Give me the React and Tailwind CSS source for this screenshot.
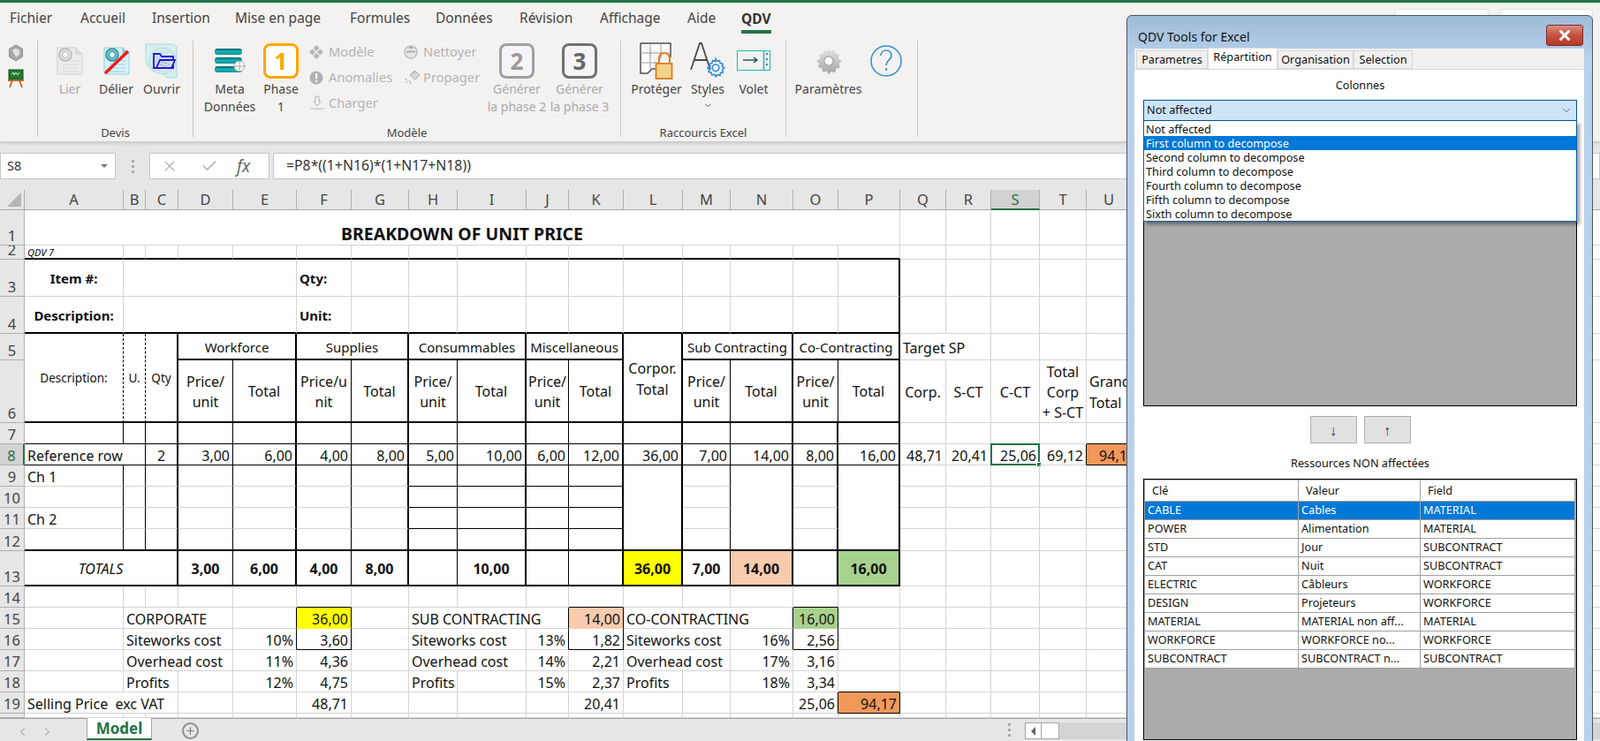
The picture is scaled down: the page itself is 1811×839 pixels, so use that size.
import { ChevronDown, ChevronLeft, ChevronRight, Plus, X, Check } from 'lucide-react';

const COLS = ['A', 'B', 'C', 'D', 'E', 'F', 'G', 'H', 'I', 'J', 'K', 'L', 'M', 'N', 'O', 'P', 'Q', 'R', 'S', 'T', 'U'];
const FRAMED = COLS.slice(0, 16);

// thin and thick black cell edges
const tr = 'border-r-black';
const TR = 'border-r-2 border-r-black';
const tb = 'border-b-black';
const TB = 'border-b-2 border-b-black';
const NUM = 'justify-end';
const MID = 'justify-center text-center';
const GROUP_HEAD = 'text-[15px]';

const SPAN = { 2: 'col-span-2', 3: 'col-span-3', 4: 'col-span-4', 16: 'col-span-16' };

const FRAME = { A: tr, B: tr, C: TR, D: tr, E: TR, F: tr, G: TR, H: tr, I: TR, J: tr, K: TR, L: TR, M: tr, N: TR, O: TR, P: TR };
const HEAD = { D: tr, E: TR, F: tr, G: TR, H: tr, I: TR, J: tr, K: TR, M: tr, N: TR, O: tr, P: TR };

const num = (t, c = '') => ({ t, c: `${NUM} ${c}` });
const mid = (t, c = '') => ({ t, c: `${MID} ${c}` });
const bold = (t, c = '') => ({ t, c: `${MID} font-bold ${c}` });
const hdr = (t, c = '') => ({ t, c: `${MID} leading-[23px] whitespace-pre-line ${c}` });

const ROWS = [
  { n: 1, cells: { A: { span: 16, t: 'BREAKDOWN OF UNIT PRICE', c: `${MID} font-bold text-[19.5px] pt-[14px]` } } },
  { n: 2, under: TB, cells: { A: { t: 'QDV 7', c: 'italic text-[11px] text-black' } } },
  {
    n: 3,
    frame: { P: TR },
    cells: {
      A: { t: 'Item #:', c: `${MID} font-bold text-[15px]` },
      B: { span: 4 },
      F: { t: 'Qty:', c: 'font-bold text-[15px]' },
    },
  },
  {
    n: 4,
    frame: { P: TR },
    under: TB,
    cells: {
      A: { t: 'Description:', c: `${MID} font-bold text-[15px] ${TB}` },
      B: { span: 4, c: TB },
      F: { t: 'Unit:', c: `font-bold text-[15px] ${TB}` },
    },
  },
  {
    n: 5,
    cells: {
      A: { t: 'Description:', c: `${MID} row-span-2 text-[13.5px] ${TB} ${tr} [border-right-style:dashed]` },
      B: { t: 'U.', c: `${MID} row-span-2 text-[13.5px] ${TB} ${tr} [border-right-style:dashed]` },
      C: { t: 'Qty', c: `${MID} row-span-2 text-[13.5px] ${TB} ${TR}` },
      D: { span: 2, t: 'Workforce', c: `${MID} ${GROUP_HEAD} ${TR} ${TB}` },
      F: { span: 2, t: 'Supplies', c: `${MID} ${GROUP_HEAD} ${TR} ${TB}` },
      H: { span: 2, t: 'Consummables', c: `${MID} ${GROUP_HEAD} ${TR} ${TB}` },
      J: { span: 2, t: 'Miscellaneous', c: `${MID} ${GROUP_HEAD} ${TR} ${TB} !px-0` },
      L: { t: 'Corpor.\nTotal', c: `${MID} row-span-2 whitespace-pre-line leading-[24px] ${TR} ${TB}` },
      M: { span: 2, t: 'Sub Contracting', c: `${MID} ${GROUP_HEAD} ${TR} ${TB}` },
      O: { span: 2, t: 'Co-Contracting', c: `${MID} ${GROUP_HEAD} ${TR} ${TB} !px-0` },
      Q: { span: 2, t: 'Target SP', c: 'items-end pb-[1px]' },
    },
  },
  {
    n: 6,
    skip: ['A', 'B', 'C', 'L'],
    frame: HEAD,
    under: TB,
    cells: {
      D: hdr('Price/\nunit'),
      E: hdr('Total'),
      F: hdr('Price/u\nnit'),
      G: hdr('Total'),
      H: hdr('Price/\nunit'),
      I: hdr('Total'),
      J: hdr('Price/\nunit'),
      K: hdr('Total'),
      M: hdr('Price/\nunit'),
      N: hdr('Total'),
      O: hdr('Price/\nunit'),
      P: hdr('Total'),
      Q: mid('Corp.'),
      R: mid('S-CT'),
      S: mid('C-CT'),
      T: { t: 'Total\nCorp\n+ S-CT', c: `${MID} leading-[23px] whitespace-pre !px-0` },
      U: { t: 'Grand\nTotal', c: 'leading-[24px] whitespace-pre-line !overflow-visible' },
    },
  },
  { n: 7, frame: FRAME, under: tb, underBy: { U: tb }, cells: {} },
  {
    n: 8,
    active: true,
    frame: FRAME,
    under: tb,
    cells: {
      A: { span: 2, t: 'Reference row', c: tr },
      C: mid('2'),
      D: num('3,00'),
      E: num('6,00'),
      F: num('4,00'),
      G: num('8,00'),
      H: num('5,00'),
      I: num('10,00'),
      J: num('6,00'),
      K: num('12,00'),
      L: num('36,00'),
      M: num('7,00'),
      N: num('14,00'),
      O: num('8,00'),
      P: num('16,00'),
      Q: num('48,71'),
      R: num('20,41'),
      S: { ...num('25,06'), selected: true },
      T: num('69,12', tr),
      U: num('94,17', `bg-[#f1985a] ${tr} ${tb}`),
    },
  },
  {
    n: 9,
    frame: FRAME,
    underBy: { H: tb, I: tb, J: tb, K: tb },
    cells: {
      A: { t: 'Ch 1' },
      L: { c: 'row-span-4 !border-b-2 !border-b-black' },
      N: { c: 'row-span-4 !border-b-2 !border-b-black' },
      P: { c: 'row-span-4 !border-b-2 !border-b-black' },
    },
  },
  { n: 10, skip: ['L', 'N', 'P'], frame: FRAME, underBy: { H: tb, I: tb, J: tb, K: tb }, cells: {} },
  { n: 11, skip: ['L', 'N', 'P'], frame: FRAME, underBy: { H: tb, I: tb, J: tb, K: tb }, cells: { A: { t: 'Ch 2' } } },
  { n: 12, skip: ['L', 'N', 'P'], frame: FRAME, under: TB, cells: {} },
  {
    n: 13,
    frame: FRAME,
    under: TB,
    cells: {
      A: { span: 3, t: 'TOTALS', c: `${MID} italic ${TR}` },
      D: bold('3,00'),
      E: bold('6,00'),
      F: bold('4,00'),
      G: bold('8,00'),
      I: bold('10,00'),
      L: bold('36,00', 'bg-[#ffff00]'),
      M: bold('7,00'),
      N: bold('14,00', `bg-[#f8cbad] ${tr}`),
      O: { c: TR },
      P: bold('16,00', 'bg-[#a9d18e]'),
    },
  },
  { n: 14, underBy: { F: tb, K: tb, O: tb }, cells: {} },
  {
    n: 15,
    cells: {
      B: { span: 3, t: 'CORPORATE' },
      E: { c: tr },
      F: num('36,00', `bg-[#ffff00] ${tr} border-b-[#ffff00]`),
      H: { span: 3, t: 'SUB CONTRACTING', c: tr },
      K: num('14,00', `bg-[#f8cbad] ${tr} border-b-[#f8cbad]`),
      L: { span: 3, t: 'CO-CONTRACTING', c: tr },
      O: num('16,00', `bg-[#a9d18e] ${tr} border-b-[#a9d18e]`),
    },
  },
  {
    n: 16,
    cells: {
      B: { span: 3, t: 'Siteworks cost' },
      E: num('10%', tr),
      F: num('3,60', `${tr} ${tb}`),
      H: { span: 2, t: 'Siteworks cost' },
      J: num('13%', tr),
      K: num('1,82', `${tr} ${tb}`),
      L: { span: 2, t: 'Siteworks cost' },
      N: num('16%', tr),
      O: num('2,56', `${tr} ${tb}`),
    },
  },
  {
    n: 17,
    cells: {
      B: { span: 3, t: 'Overhead cost' },
      E: num('11%'),
      F: num('4,36'),
      H: { span: 2, t: 'Overhead cost' },
      J: num('14%'),
      K: num('2,21'),
      L: { span: 2, t: 'Overhead cost' },
      N: num('17%'),
      O: num('3,16'),
    },
  },
  {
    n: 18,
    underBy: { P: tb },
    cells: {
      B: { span: 2, t: 'Profits' },
      E: num('12%'),
      F: num('4,75'),
      H: { t: 'Profits' },
      J: num('15%'),
      K: num('2,37'),
      L: { t: 'Profits' },
      N: num('18%'),
      O: num('3,34'),
    },
  },
  {
    n: 19,
    cells: {
      A: { span: 3, t: 'Selling Price  exc VAT', c: 'whitespace-pre' },
      F: num('48,71'),
      K: num('20,41'),
      O: num('25,06', tr),
      P: num('94,17', `bg-[#f1985a] ${tr} ${tb}`),
    },
  },
  { n: 20, hideLabel: true, cells: {} },
];

const RESOURCES = [
  ['CABLE', 'Cables', 'MATERIAL'],
  ['POWER', 'Alimentation', 'MATERIAL'],
  ['STD', 'Jour', 'SUBCONTRACT'],
  ['CAT', 'Nuit', 'SUBCONTRACT'],
  ['ELECTRIC', 'Câbleurs', 'WORKFORCE'],
  ['DESIGN', 'Projeteurs', 'WORKFORCE'],
  ['MATERIAL', 'MATERIAL non aff...', 'MATERIAL'],
  ['WORKFORCE', 'WORKFORCE no...', 'WORKFORCE'],
  ['SUBCONTRACT', 'SUBCONTRACT n...', 'SUBCONTRACT'],
];

const OPTIONS = [
  'Not affected',
  'First column to decompose',
  'Second column to decompose',
  'Third column to decompose',
  'Fourth column to decompose',
  'Fifth column to decompose',
  'Sixth column to decompose',
];

/* ---------- ribbon icons ---------- */

const Hex = () => (
  <svg width="18" height="20" viewBox="0 0 18 20">
    <path d="M9 1l7.500 4.300v9L9 19l-7.500-4.700v-9z" fill="#a8a8a8" stroke="#8c8c8c" />
    <path d="M5 7l4-2.500 4 2.500v5l-4 2.500z" fill="#e2e2e2" />
  </svg>
);

const Board = () => (
  <svg width="20" height="22" viewBox="0 0 20 22">
    <rect x="2" y="1" width="16" height="11" fill="#1f7a2e" stroke="#0f4a1a" />
    <path d="M5 6l2-2 1 3 2-3 2 3 2-3" stroke="#e8f5e8" fill="none" strokeWidth="0.900" />
    <path d="M1 13h18" stroke="#c46a1c" strokeWidth="2" />
    <path d="M6 13l-3 8M14 13l3 8" stroke="#a85412" strokeWidth="1.500" />
  </svg>
);

const Doc = ({ slash, faded }) => (
  <svg width="32" height="32" viewBox="0 0 32 32">
    <path d="M2 1h21l7 7v23H2z" fill={faded ? '#ececec' : '#d8f2f6'} stroke={faded ? '#cfcfcf' : '#8ed4de'} />
    <path d="M23 1v7h7" fill={faded ? '#dcdcdc' : '#8fc8d8'} stroke={faded ? '#cfcfcf' : '#8ed4de'} />
    {[16, 20, 24, 28].map((y) => (
      <path key={y} d={`M8 ${y}h18`} stroke={faded ? '#d9d9d9' : '#9ad0e8'} />
    ))}
    <circle cx="11" cy="9" r="7" fill={faded ? '#dedede' : '#63c3cf'} stroke={faded ? '#b9b9b9' : '#2f8f9c'} strokeWidth="1.500" />
    <circle cx="11" cy="9" r="3.500" fill="#f5f5f5" stroke={faded ? '#bcbcbc' : '#3a8da0'} />
    {slash && <path d="M3 30L29 5" stroke="#f01a1a" strokeWidth="3.500" />}
  </svg>
);

const OpenDoc = () => (
  <svg width="38" height="40" viewBox="0 0 38 40">
    <path d="M1 1h32l3 3v35H26l-6-5C8 34 1 26 1 18z" fill="#d6eef0" stroke="#a8d8dc" />
    <circle cx="20" cy="20" r="15" fill="#cfe8ea" stroke="#b5dcdf" />
    <path d="M10 12h7l2 3h13v13H10z" fill="#c8dce6" stroke="#2a10e0" strokeWidth="1.800" />
    <path d="M13 28l4-9h17l-4 9z" fill="#cfdfe4" stroke="#2a10e0" strokeWidth="1.800" />
    <path d="M18 21l10 3M17 24l9 3" stroke="#96b3bd" />
  </svg>
);

const Meta = () => (
  <svg width="36" height="32" viewBox="0 0 36 32">
    <defs>
      <linearGradient id="metaBar" x1="0" y1="0" x2="0" y2="1">
        <stop offset="0" stopColor="#0f5f66" />
        <stop offset="0.500" stopColor="#14b3b8" />
        <stop offset="1" stopColor="#0c8f96" />
      </linearGradient>
    </defs>
    <rect x="1" y="2" width="31" height="7" rx="3" fill="url(#metaBar)" />
    <rect x="1" y="12" width="31" height="7" rx="3" fill="url(#metaBar)" />
    <rect x="1" y="22" width="31" height="7" rx="3" fill="url(#metaBar)" />
    <circle cx="29" cy="22" r="6" fill="#f3f2f1" stroke="#8a8a8a" strokeDasharray="1.500 1" />
    <path d="M23 22h12M29 16v12" stroke="#8a8a8a" strokeDasharray="1.500 1" />
  </svg>
);

const NumBox = ({ n, c }) => (
  <div className={`w-[40px] h-[40px] rounded-lg border-[3px] flex items-center justify-center text-[26px] font-bold font-['Noto_Sans',sans-serif] ${c}`}>
    {n}
  </div>
);

const Diamonds = () => (
  <svg width="16" height="16" viewBox="0 0 16 16" fill="#b5b5b5">
    <path d="M8 0l3.500 3.500L8 7 4.500 3.500zM3.500 4.500L7 8l-3.500 3.500L0 8zM12.500 4.500L16 8l-3.500 3.500L9 8zM8 9l3.500 3.500L8 16l-3.500-3.500z" />
  </svg>
);

const Warn = () => (
  <svg width="16" height="16" viewBox="0 0 16 16">
    <circle cx="8" cy="8" r="7.500" fill="#b0b0b0" />
    <rect x="7" y="3" width="2.200" height="6.500" fill="#fff" />
    <rect x="7" y="11" width="2.200" height="2.200" fill="#fff" />
  </svg>
);

const Load = () => (
  <svg width="18" height="18" viewBox="0 0 18 18" fill="none" stroke="#b5b5b5">
    <path d="M7 1h4v6h2l-4 5-4-5h2z" />
    <path d="M1 14c2 2 3 2 4 .500 1 1.500 3 1.500 4 0 1 1.500 3 1.500 4 0 1 1.500 2 1.500 4-.500" />
  </svg>
);

const Clean = () => (
  <svg width="16" height="16" viewBox="0 0 16 16">
    <circle cx="8" cy="8" r="7" fill="#e4e4e4" stroke="#bdbdbd" strokeWidth="1.500" />
    <path d="M3 7.500h10" stroke="#9f9f9f" strokeWidth="1.500" />
    <path d="M6 3h4" stroke="#a8a8a8" strokeWidth="2" />
  </svg>
);

const Spread = () => (
  <svg width="20" height="18" viewBox="0 0 20 18" fill="none" stroke="#a6a6a6">
    <path d="M12 1l6 5-5 5-6-5z" fill="#dedede" />
    <path d="M10 3l5 5M13 2l5 5M9 6l5-4" strokeDasharray="1 1" />
    <path d="M1 10l3 2M2 15l2-2M6 12l2 4" />
  </svg>
);

const Protect = () => (
  <svg width="38" height="44" viewBox="0 0 38 44">
    <path d="M1 2h34v16M1 2v34h8l5-5h8" fill="#fff" stroke="#4d4d4d" strokeWidth="1.500" />
    <path d="M1 13h34M1 24h22M12 2v29M24 2v18" stroke="#9a9a9a" fill="none" />
    <path d="M22 25v-6a6 6 0 0 1 12 0v6" fill="none" stroke="#e07b16" strokeWidth="2" />
    <rect x="18.500" y="25" width="18" height="17" fill="#f5d48c" stroke="#e07b16" strokeWidth="1.800" />
  </svg>
);

const GearPath = 'M12 2l1.600 3.200 3.500-1 .9 3.500 3.500.900-1 3.500L23.500 14l-2.500 2.500 1 3.500-3.500.9-.9 3.500-3.500-1L12 26l-1.600-3.100-3.500 1-.9-3.500-3.500-.9 1-3.500L1 14l3.500-1.900-1-3.500 3.500-.9.900-3.500 3.500 1z';

const StylesIcon = () => (
  <svg width="40" height="44" viewBox="0 0 40 44" fill="none">
    <path d="M1 32L11 2h2l10 30M5 21h14" stroke="#4a4a4a" strokeWidth="1.800" />
    <g transform="translate(19 18) scale(0.840)" stroke="#2f8fd8" strokeWidth="2">
      <path d={GearPath} />
      <circle cx="12" cy="14" r="4.500" />
    </g>
  </svg>
);

const Pane = () => (
  <svg width="38" height="24" viewBox="0 0 38 24" fill="none">
    <rect x="0.500" y="0.500" width="37" height="22" stroke="#1cb9bd" />
    <path d="M30.500 1v22" stroke="#1cb9bd" strokeWidth="1.500" />
    <path d="M7 11h15M19 8l4 3-4 3" stroke="#1c5a66" strokeWidth="1.500" />
    <path d="M33 4h2M33 10h2M33 16h2" stroke="#1c5a66" strokeWidth="1.500" />
  </svg>
);

const BigGear = () => (
  <svg width="32" height="36" viewBox="0 0 24 28">
    <defs>
      <linearGradient id="gearFill" x1="0" y1="0" x2="0" y2="1">
        <stop offset="0" stopColor="#e6e6e6" />
        <stop offset="1" stopColor="#a3a3a3" />
      </linearGradient>
    </defs>
    <path d={GearPath} fill="url(#gearFill)" />
    <circle cx="12" cy="14" r="4" fill="#fafafa" stroke="#a0a0a0" />
  </svg>
);

const Help = () => (
  <svg width="36" height="36" viewBox="0 0 36 36" fill="none" stroke="#2e8fd0">
    <circle cx="18" cy="18" r="17" strokeWidth="1.500" />
    <path d="M12 12c0-4 3-6 6-6 4 0 6 3 6 6 0 5-6 5-6 11" strokeWidth="1.600" />
    <path d="M18 26v3" strokeWidth="1.800" />
  </svg>
);

const Corner = () => (
  <svg width="16" height="16" viewBox="0 0 16 16">
    <path d="M16 0v16H0z" fill="#b4b4b4" />
  </svg>
);

/* ---------- ribbon parts ---------- */

const BigBtn = ({ w, icon, label, muted, extra }) => (
  <div className={`flex flex-col items-center shrink-0 ${w}`}>
    <div className="h-[44px] flex items-center justify-center">{icon}</div>
    <div className={`text-center whitespace-pre-line leading-[20px] ${muted ? 'text-[#a9a9a9]' : 'text-[#444]'}`}>{label}</div>
    {extra}
  </div>
);

const SmallBtn = ({ icon, label }) => (
  <div className="flex items-center h-[29px] text-[#b3b3b3] text-[14.7px]">
    <div className="w-[22px] flex justify-start">{icon}</div>
    <span>{label}</span>
  </div>
);

const Group = ({ w, pad, label, children }) => (
  <div className={`flex flex-col h-[109px] border-r border-[#c8c6c4] shrink-0 ${w}`}>
    <div className={`flex flex-1 pt-[1px] ${pad}`}>{children}</div>
    {label && <div className="h-[9px] leading-[9px] text-center text-[13px] text-[#444]">{label}</div>}
  </div>
);

const MENU = [
  ['Fichier', 'w-[80px]'],
  ['Accueil', 'w-[81px]'],
  ['Insertion', 'w-[94px]'],
  ['Mise en page', 'w-[130px]'],
  ['Formules', 'w-[97px]'],
  ['Données', 'w-[95px]'],
  ['Révision', 'w-[91px]'],
  ['Affichage', 'w-[99px]'],
  ['Aide', 'w-[61px]'],
];

const Ribbon = () => (
  <div className="h-[160px] bg-[#f3f2f1] shadow-[0_2px_4px_rgba(0,0,0,0.15)] relative z-10 font-['Noto_Sans',sans-serif] text-[14px] shrink-0">
    <div className="h-[3px] bg-[#217346]" />
    <div className="flex h-[36px] pl-[11px] text-[15.5px] text-[#444] items-center">
      {MENU.map(([name, w]) => (
        <div key={name} className={w}>
          {name}
        </div>
      ))}
      <div className="relative font-bold text-[#333] pt-[1px]">
        QDV
        <div className="absolute left-0 right-0 top-[25px] h-[4px] bg-[#217346]" />
      </div>
      <div className="ml-auto mr-[8px] flex self-end gap-[12px] mb-[1px]">
        <div className="w-[106px] h-[28px] bg-white rounded border border-[#e0dfde]" />
        <div className="w-[106px] h-[28px] bg-white rounded border border-[#e0dfde]" />
      </div>
    </div>
    <div className="flex pt-[7px]">
      <Group w="w-[43px]" pad="flex-col items-center gap-[8px] pt-[4px] pr-[6px]">
        <Hex />
        <Board />
      </Group>
      <Group w="w-[176px]" pad="pl-[10px]" label="Devis">
        <BigBtn w="w-[52px]" icon={<Doc faded />} label="Lier" muted />
        <BigBtn w="w-[53px]" icon={<Doc slash />} label="Délier" />
        <BigBtn w="w-[50px]" icon={<OpenDoc />} label="Ouvrir" />
      </Group>
      <Group w="w-[484px]" pad="pl-[11px]" label="Modèle">
        <BigBtn w="w-[60px]" icon={<Meta />} label={'Meta\nDonnées'} />
        <BigBtn w="w-[56px]" icon={<NumBox n="1" c="border-[#ffa500] text-[#ffa500] bg-white" />} label={'Phase\n1'} />
        <div className="w-[111px] shrink-0 pl-[4px] -mt-[3px]">
          <SmallBtn icon={<Diamonds />} label="Modèle" />
          <SmallBtn icon={<Warn />} label="Anomalies" />
          <SmallBtn icon={<Load />} label="Charger" />
        </div>
        <div className="w-[94px] shrink-0 -mt-[3px]">
          <SmallBtn icon={<Clean />} label="Nettoyer" />
          <SmallBtn icon={<Spread />} label="Propager" />
        </div>
        <BigBtn w="w-[68px]" icon={<NumBox n="2" c="border-[#a0a0a0] text-[#9a9a9a] bg-[#f6f3f8]" />} label={'Générer\nla phase 2'} muted />
        <BigBtn w="w-[74px]" icon={<NumBox n="3" c="border-[#707070] text-[#666] bg-[#f6f3f8]" />} label={'Générer\nla phase 3'} muted />
      </Group>
      <Group w="w-[187px]" pad="pl-[10px]" label="Raccourcis Excel">
        <BigBtn w="w-[60px]" icon={<Protect />} label="Protéger" />
        <BigBtn
          w="w-[56px]"
          icon={<StylesIcon />}
          label="Styles"
          extra={<ChevronDown size={11} className="text-[#444] mt-[3px]" />}
        />
        <BigBtn w="w-[48px]" icon={<Pane />} label="Volet" />
      </Group>
      <Group w="w-[149px]" pad="pl-[10px]">
        <BigBtn w="w-[75px]" icon={<BigGear />} label="Paramètres" />
        <BigBtn w="w-[56px]" icon={<Help />} label="" />
      </Group>
    </div>
  </div>
);

const FormulaBar = () => (
  <div className="h-[55px] bg-[#e6e6e6] shrink-0 pt-[13px] flex items-start font-['Noto_Sans',sans-serif]">
    <div className="w-[131px] h-[30px] bg-white border border-[#c6c6c6] flex items-center justify-between pl-[7px] pr-[8px] text-[14.5px] text-[#333]">
      S8
      <div className="w-0 h-0 border-x-[4px] border-x-transparent border-t-[4px] border-t-[#777]" />
    </div>
    <div className="w-[38px] h-[30px] flex flex-col items-center justify-center gap-[3px]">
      <div className="w-[3px] h-[3px] bg-[#aaa]" />
      <div className="w-[3px] h-[3px] bg-[#aaa]" />
      <div className="w-[3px] h-[3px] bg-[#aaa]" />
    </div>
    <div className="w-[136px] h-[30px] bg-white border border-[#c6c6c6] flex items-center">
      <X size={20} strokeWidth={1.5} className="text-[#b4b4b4] ml-[12px]" />
      <Check size={20} strokeWidth={2} className="text-[#b4b4b4] ml-[25px]" />
      <span className="ml-[21px] font-['Liberation_Serif',serif] italic text-[19px] text-[#666]">fx</span>
    </div>
    <div className="ml-[4px] flex-1 h-[30px] bg-white border border-[#c6c6c6] pl-[14px] flex items-center text-[15.8px] text-[#333]">
      =P8*((1+N16)*(1+N17+N18))
    </div>
  </div>
);

/* ---------- worksheet ---------- */

const Cell = ({ cell = {}, frame, under }) => {
  const span = cell.span ? SPAN[cell.span] : '';
  return (
    <div
      className={`relative flex items-center px-[3px] pt-[2px] whitespace-nowrap overflow-hidden border-r border-b border-[#d4d4d4] ${span} ${frame} ${under} ${cell.c || ''} ${cell.selected ? '!overflow-visible' : ''}`}
    >
      {cell.t}
      {cell.selected && (
        <div className="absolute -inset-[1px] border-2 border-[#217346]">
          <div className="absolute -right-[4px] -bottom-[4px] w-[6px] h-[6px] bg-[#217346] border border-white" />
        </div>
      )}
    </div>
  );
};

const Sheet = () => (
  <div className="grid grid-cols-[28px_112px_25px_37px_62px_72px_62px_65px_55px_78px_48px_62px_67px_54px_71px_51px_70px_52px_51px_55px_53px_59px_1fr] grid-rows-[23px_40px_16px_42px_42px_30px_71px_24px_24px_24px_24px_24px_25px_40px_24px_24px_24px_24px_24px_24px_5px] bg-white font-['Lato',sans-serif] text-[16px] text-[#111] shrink-0 overflow-hidden">
    <div className="bg-[#e6e6e6] border-r border-b border-[#a8a8a8] flex items-end justify-end pr-[3px] pb-[3px]">
      <Corner />
    </div>
    {COLS.map((c) => (
      <div
        key={c}
        className={`flex items-center justify-center pt-[1px] text-[#444] text-[16.5px] border-r border-[#b0b0b0] border-b ${c === 'S' ? 'bg-[#d2d2d2] text-[#217346] border-b-2 border-b-[#217346]' : 'bg-[#e6e6e6] border-b-[#a8a8a8]'} ${c === 'U' ? 'pr-[8px]' : ''}`}
      >
        {c}
      </div>
    ))}
    <div className="bg-[#e6e6e6] border-b border-[#a8a8a8]" />
    {ROWS.map((row) => {
      const taken = new Set(row.skip || []);
      const out = [];
      let i = 0;
      while (i < COLS.length) {
        const col = COLS[i];
        const cell = row.cells[col];
        if (!taken.has(col)) {
          const last = COLS[i + (cell?.span || 1) - 1];
          const frame = row.frame?.[cell?.span ? last : col] || '';
          const fromRow = FRAMED.includes(col) ? row.under || '' : '';
          out.push(<Cell key={col} cell={cell} frame={frame} under={row.underBy?.[col] || fromRow} />);
        }
        i += cell?.span || 1;
      }
      return [
        <div
          key={`h${row.n}`}
          className={`flex items-end justify-center overflow-hidden leading-[21px] text-[16.5px] border-r border-b border-[#b0b0b0] ${row.active ? 'bg-[#d2d2d2] text-[#217346] border-r-2 border-r-[#217346]' : 'bg-[#e6e6e6] text-[#444]'}`}
        >
          {!row.hideLabel && row.n}
        </div>,
        ...out,
        <div key={`f${row.n}`} className="border-b border-[#d4d4d4]" />,
      ];
    })}
  </div>
);

const SheetTabs = () => (
  <div className="flex-1 bg-[#e6e6e6] border-t border-[#a6a6a6] flex items-start text-[#b5b5b5]">
    <ChevronLeft size={15} className="ml-[18px] mt-[7px]" />
    <ChevronRight size={15} className="ml-[13px] mt-[7px]" />
    <div className="ml-[37px] -mt-px w-[74px] h-[25px] bg-white border-x border-[#a6a6a6] border-b-2 border-b-[#217346] flex items-center justify-center font-['Lato',sans-serif] font-bold text-[17px] text-[#217346]">
      Model
    </div>
    <div className="ml-[34px] mt-[4px] w-[19px] h-[19px] rounded-full border-2 border-[#8e8e8e] flex items-center justify-center text-[#777]">
      <Plus size={13} strokeWidth={2} />
    </div>
    <div className="ml-[916px] mt-[4px] flex flex-col gap-[3px] pt-[1px]">
      <div className="w-[3px] h-[3px] bg-[#aaa]" />
      <div className="w-[3px] h-[3px] bg-[#aaa]" />
      <div className="w-[3px] h-[3px] bg-[#aaa]" />
    </div>
    <div className="ml-[16px] mt-[4px] w-[39px] h-[19px] flex bg-white border border-[#a6a6a6]">
      <div className="w-[18px] flex items-center justify-center border-r border-[#a6a6a6]">
        <div className="w-0 h-0 border-y-[5px] border-y-transparent border-r-[5px] border-r-[#666]" />
      </div>
    </div>
    <div className="mt-[4px] flex-1 h-[19px] bg-[#d4d4d4]" />
  </div>
);

/* ---------- floating QDV window ---------- */

const TABS = [
  ['Parametres', 'w-[81px] h-[21px]'],
  ['Répartition', 'w-[79px] h-[24px] bg-white border-b-0 pb-[3px]'],
  ['Organisation', 'w-[86px] h-[21px]'],
  ['Selection', 'w-[67px] h-[21px]'],
];

const QdvWindow = () => (
  <div className="absolute left-[1275px] top-[17px] w-[528px] h-[830px] rounded-t-md border border-[#4a5866] bg-[#b9d1ea] bg-gradient-to-b from-[#9ebbd9] to-[#b9d1ea] to-[6%] font-['Liberation_Sans',sans-serif] text-[12.7px] text-[#111] z-20 flex flex-col">
    <div className="h-[37px] shrink-0 flex items-start justify-between pl-[12px] pr-[10px]">
      <span className="text-[14px] mt-[13px]">QDV Tools for Excel</span>
      <div className="mt-[10px] w-[42px] h-[24px] rounded-[3px] border border-[#7a2b2b] bg-gradient-to-b from-[#d98d80] via-[#c4513f] to-[#b63a28] flex items-center justify-center">
        <X size={18} strokeWidth={4} className="text-white" />
      </div>
    </div>
    <div className="flex-1 ml-[8px] mr-[9px] bg-[#f0f0f0] flex flex-col">
      <div className="flex items-end h-[24px] pl-[2px] shrink-0 border-b border-[#d9d9d9]">
        {TABS.map(([name, c]) => (
          <div key={name} className={`flex items-center justify-center border border-[#d9d9d9] ${c}`}>
            {name}
          </div>
        ))}
      </div>
      <div className="flex-1 bg-white flex flex-col pl-[10px] pr-[8px]">
        <div className="h-[34px] shrink-0 flex items-center justify-center pt-[2px]">Colonnes</div>
        <div className="relative">
          <div className="h-[24px] bg-[#cce4f7] border border-[#005499] flex items-center justify-between pl-[3px] pr-[4px]">
            Not affected
            <ChevronDown size={14} strokeWidth={1} className="text-[#222]" />
          </div>
          <div className="absolute top-[24px] left-0 right-0 z-10 bg-white border border-[#0a5ea8] border-t-0 pt-[1px] shadow-[3px_3px_4px_rgba(0,0,0,0.4)] leading-[16px]">
            {OPTIONS.map((o, i) => (
              <div key={o} className={`h-[16px] pl-[2px] ${i === 1 ? 'bg-[#0078d7] text-white' : ''}`}>
                {o}
              </div>
            ))}
          </div>
          <div className="h-[323px] bg-[#ababab] border border-black border-t-0" />
        </div>
        <div className="mt-[11px] flex justify-center gap-[8px] shrink-0">
          <div className="w-[53px] h-[31px] bg-[#e1e1e1] border border-[#adadad] flex items-center justify-center text-[#303070] text-[16px]">↓</div>
          <div className="w-[53px] h-[31px] bg-[#e1e1e1] border border-[#adadad] flex items-center justify-center text-[#303070] text-[16px]">↑</div>
        </div>
        <div className="h-[40px] shrink-0 flex items-center justify-center pt-[5px]">Ressources NON affectées</div>
        <div className="h-[296px] shrink-0 border border-black bg-[#ababab] pt-[1px] px-[1px]">
          <div className="grid grid-cols-[174px_138px_175px] grid-rows-[24px_repeat(9,21px)] bg-white">
            {['Clé', 'Valeur', 'Field'].map((h) => (
              <div key={h} className="flex items-center pl-[8px] border-r border-b border-[#a0a0a0]">
                {h}
              </div>
            ))}
            {RESOURCES.map((r, i) =>
              r.map((v) => (
                <div
                  key={`${i}${v}`}
                  className={`flex items-center pl-[3px] whitespace-nowrap overflow-hidden border-r border-b border-[#a0a0a0] ${i === 0 ? 'bg-[#0078d7] text-white' : ''}`}
                >
                  {v}
                </div>
              ))
            )}
          </div>
        </div>
      </div>
    </div>
  </div>
);

export default function App() {
  return (
    <div className="relative w-[1811px] h-[839px] overflow-hidden bg-[#e6e6e6] flex flex-col">
      <Ribbon />
      <FormulaBar />
      <Sheet />
      <SheetTabs />
      <QdvWindow />
    </div>
  );
}
